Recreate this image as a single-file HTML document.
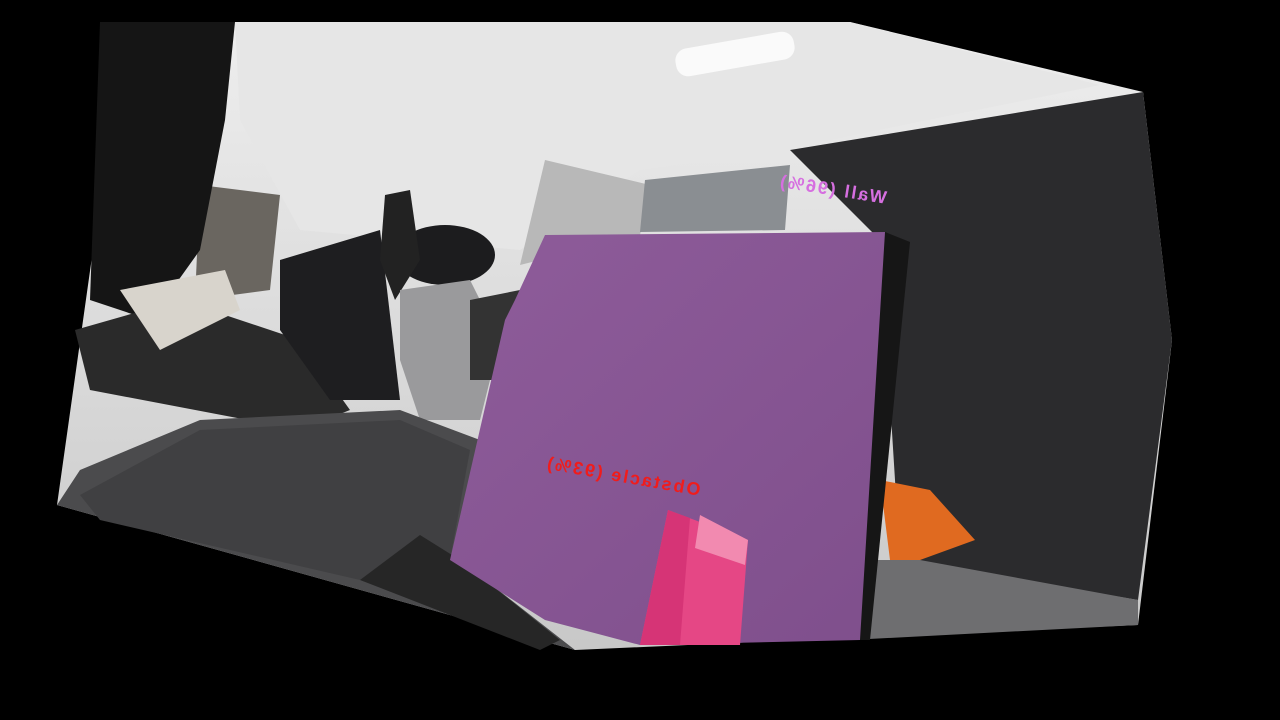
<!DOCTYPE html>
<html><head><meta charset="utf-8"><style>
html,body{margin:0;padding:0;background:#000;width:1280px;height:720px;overflow:hidden}
svg{position:absolute;left:0;top:0}
.t{position:absolute;font-family:"Liberation Sans",sans-serif;font-weight:bold;font-size:18px;letter-spacing:2px;white-space:nowrap;transform-origin:left top}
</style></head><body>
<svg width="1280" height="720" viewBox="0 0 1280 720">
<defs>
<linearGradient id="wall" x1="0" y1="0" x2="0" y2="1"><stop offset="0" stop-color="#eeeeee"/><stop offset="1" stop-color="#c8c8c8"/></linearGradient>
<linearGradient id="pur" x1="0" y1="0" x2="1" y2="1"><stop offset="0" stop-color="#8e5c9a"/><stop offset="1" stop-color="#7f4f8c"/></linearGradient>
</defs>
<polygon points="150,22 850,22 1143,92 1172,340 1138,625 575,650 57,505 100,200" fill="url(#wall)"/>
<polygon points="235,22 850,22 1100,85 780,150 640,170 520,250 300,230 240,120" fill="#e6e6e6"/>
<rect x="675" y="40" width="120" height="28" rx="12" fill="#fafafa" transform="rotate(-10 735 54)"/>
<polygon points="545,160 650,185 640,235 520,265" fill="#b8b8b8"/>
<polygon points="645,180 790,165 785,230 640,232" fill="#8a8e92"/>
<polygon points="200,185 280,195 270,290 195,300" fill="#6a6660"/>
<polygon points="790,150 1143,92 1172,340 1138,600 900,560 880,240" fill="#2b2b2d"/>
<polygon points="920,560 1138,600 1138,625 850,640 860,560" fill="#6e6e70"/>
<polygon points="880,480 930,490 975,540 920,560 890,560" fill="#e06a20"/>
<polygon points="100,22 235,22 225,120 200,250 150,320 90,300" fill="#151515"/>
<polygon points="75,330 180,300 300,340 350,410 300,430 90,390" fill="#2a2a2a"/>
<polygon points="120,290 225,270 240,310 160,350" fill="#d8d4cc"/>
<polygon points="280,260 380,230 400,400 330,400 280,330" fill="#1e1e20"/>
<ellipse cx="445" cy="255" rx="50" ry="30" fill="#1c1c1e"/>
<polygon points="385,195 410,190 420,260 395,300 380,260" fill="#222"/>
<polygon points="400,290 470,280 500,340 480,420 420,420 400,360" fill="#9a9a9c"/>
<polygon points="470,300 520,290 510,380 470,380" fill="#333"/>
<polygon points="57,505 80,470 200,420 400,410 480,440 460,560 575,650" fill="#4b4b4d"/>
<polygon points="80,495 200,430 400,420 470,450 450,560 360,580 100,520" fill="#404042"/>
<polygon points="360,580 420,535 460,560 560,640 540,650" fill="#262626"/>
<polygon points="885,232 910,242 870,640 850,640" fill="#161616"/>
<polygon points="545,235 885,232 860,640 640,645 545,620 450,560 505,320 515,300" fill="url(#pur)"/>
<polygon points="668,510 748,540 740,645 640,645" fill="#e54785"/>
<polygon points="700,515 748,540 745,565 695,548" fill="#f28ab0"/>
<polygon points="668,510 690,518 680,645 640,645" fill="#d63476"/>
</svg>
<div class="t" style="left:888px;top:188px;color:#d66fe0;transform:rotate(9deg) scaleX(-1)">Wall (96%)</div>
<div class="t" style="left:702px;top:480px;color:#f01c1c;transform:rotate(10deg) scaleX(-1)">Obstacle (93%)</div>
</body></html>
